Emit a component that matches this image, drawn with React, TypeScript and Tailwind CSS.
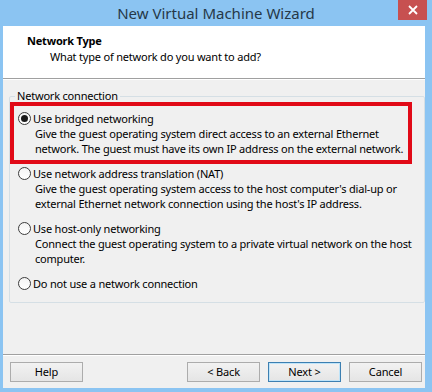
import { useState } from 'react';

const options = [
  {
    id: 'bridged',
    label: 'Use bridged networking',
    desc: [
      'Give the guest operating system direct access to an external Ethernet',
      'network. The guest must have its own IP address on the external network.',
    ],
  },
  {
    id: 'nat',
    label: 'Use network address translation (NAT)',
    desc: [
      "Give the guest operating system access to the host computer's dial-up or",
      "external Ethernet network connection using the host's IP address.",
    ],
  },
  {
    id: 'hostonly',
    label: 'Use host-only networking',
    desc: [
      'Connect the guest operating system to a private virtual network on the host',
      'computer.',
    ],
  },
  {
    id: 'none',
    label: 'Do not use a network connection',
    desc: [],
  },
];

const Radio = ({ checked }: { checked: boolean }) => (
  <span className="flex h-[13px] w-[13px] shrink-0 items-center justify-center rounded-full border border-[#3c3c3c] bg-gradient-to-b from-[#f4f4f4] to-[#ffffff]">
    {checked && <span className="h-[7px] w-[7px] rounded-full bg-[#1a1a1a]" />}
  </span>
);

const WizButton = ({ label, primary }: { label: string; primary?: boolean }) => (
  <button
    className={`h-[20px] w-[73px] border bg-gradient-to-b from-[#f2f2f2] to-[#e5e5e5] text-[11px] leading-none tracking-[-0.15px] text-black ${
      primary ? 'border-[#3c7fb1] shadow-[inset_0_0_0_1px_#bfe4f9]' : 'border-[#acacac]'
    }`}
  >
    {label}
  </button>
);

export default function App() {
  const [selected, setSelected] = useState('bridged');

  return (
    <div
      className="flex h-[392px] w-[432px] flex-col bg-[#8bc4f2] text-[11px] tracking-[-0.2px] text-black"
      style={{ fontFamily: '"Noto Sans", "Open Sans", sans-serif' }}
    >
      {/* Title bar */}
      <div className="relative flex h-[26px] shrink-0 items-center justify-center">
        <span className="text-[15px] leading-none tracking-normal text-[#263848]">New Virtual Machine Wizard</span>
        <div className="absolute right-[5px] top-0 flex h-[20px] w-[29px] items-center justify-center bg-[#c75050]">
          <svg width="10" height="10" viewBox="0 0 10 10">
            <path d="M1 1 L9 9 M9 1 L1 9" stroke="#fff" strokeWidth="1.8" />
          </svg>
        </div>
      </div>

      {/* Client area */}
      <div className="ml-[3px] mr-[7px] mb-[4px] flex flex-1 flex-col bg-[#f0f0f0]">
        <div className="flex h-[53px] shrink-0 flex-col border-b border-[#a0a0a0] bg-white pl-[24px] pt-[7px]">
          <span className="font-bold leading-[16px]">Network Type</span>
          <span className="pl-[23px] leading-[16px]">What type of network do you want to add?</span>
        </div>

        <div className="flex-1 border-t border-white pl-[6px] pr-[4px] pt-[9px]">
          <fieldset className="h-[214px] rounded-[2px] border border-[#d5dfe5] pl-0 pr-[12px]">
            <legend className="ml-[5px] px-[2px] leading-[14px]">Network connection</legend>
            <div className="flex flex-col whitespace-nowrap">
              {options.map((o, i) => {
                const inner = (
                  <div className="flex flex-col">
                    <label
                      className="flex cursor-default items-center gap-[2px] leading-[15px]"
                      onClick={() => setSelected(o.id)}
                    >
                      <Radio checked={selected === o.id} />
                      <span>{o.label}</span>
                    </label>
                    {o.desc.map((d) => (
                      <span key={d} className="pl-[17px] leading-[15px]">
                        {d}
                      </span>
                    ))}
                  </div>
                );
                if (i === 0) {
                  return (
                    <div key={o.id} className="-mt-[1px] border-[4px] border-[#e10a17] pl-[4px] pt-[5px] pb-[4px]">
                      {inner}
                    </div>
                  );
                }
                return (
                  <div key={o.id} className={`pl-[8px] ${i === 1 ? 'mt-[2px]' : 'mt-[10px]'}`}>
                    {inner}
                  </div>
                );
              })}
            </div>
          </fieldset>
        </div>

        <div className="flex h-[34px] shrink-0 items-center border-t border-[#a0a0a0] pl-[7px] pr-[3px] shadow-[inset_0_1px_0_#ffffff]">
          <WizButton label="Help" />
          <div className="ml-auto flex gap-[8px]">
            <WizButton label="< Back" />
            <WizButton label="Next >" primary />
            <WizButton label="Cancel" />
          </div>
        </div>
      </div>
    </div>
  );
}
